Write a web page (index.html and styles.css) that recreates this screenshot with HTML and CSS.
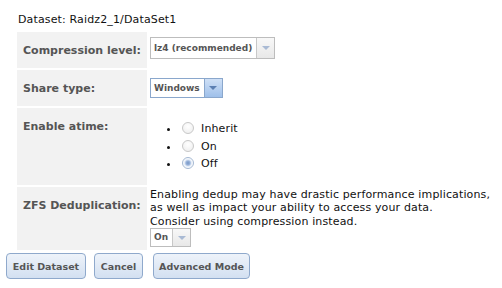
FILE: index.html
```html
<!DOCTYPE html>
<html>
<head>
<meta charset="utf-8">
<link rel="stylesheet" href="styles.css">
</head>
<body>
<div class="page">
  <div class="dataset">Dataset: Raidz2_1/DataSet1</div>
  <table class="form">
    <tr class="r-comp">
      <th>Compression level:</th>
      <td><span class="select wide"><span class="sel-text">lz4 (recommended)</span><span class="arrow"><span class="tri"></span></span></span></td>
    </tr>
    <tr class="r-share">
      <th>Share type:</th>
      <td><span class="select focus"><span class="sel-text">Windows</span><span class="arrow"><span class="tri"></span></span></span></td>
    </tr>
    <tr class="r-atime">
      <th>Enable atime:</th>
      <td>
        <ul class="radios">
          <li><span class="radio"></span>Inherit</li>
          <li><span class="radio"></span>On</li>
          <li><span class="radio checked"></span>Off</li>
        </ul>
      </td>
    </tr>
    <tr class="r-dedup">
      <th>ZFS Deduplication:</th>
      <td>
        <div class="help">Enabling dedup may have drastic performance implications,<br>as well as impact your ability to access your data.<br>Consider using compression instead.</div>
        <span class="select small"><span class="sel-text">On</span><span class="arrow"><span class="tri"></span></span></span>
      </td>
    </tr>
  </table>
  <div class="buttons">
    <button class="btn b-edit">Edit Dataset</button>
    <button class="btn b-cancel">Cancel</button>
    <button class="btn b-adv">Advanced Mode</button>
  </div>
</div>
</body>
</html>
```

FILE: styles.css
```css
html, body {
  margin: 0;
  padding: 0;
  background: #ffffff;
}
body {
  font-family: "DejaVu Sans", Verdana, sans-serif;
  font-size: 11px;
  color: #111;
  letter-spacing: 0.14px;
}
.page {
  padding: 13px 0 0 6px;
}
.dataset {
  margin-left: 12px;
  height: 13px;
  line-height: 13px;
}
.form {
  border-collapse: separate;
  border-spacing: 2px;
  margin: 4px 0 0 9px;
}
.form th {
  width: 118px;
  min-width: 118px;
  max-width: 118px;
  background: #f2f2f2;
  text-align: left;
  vertical-align: top;
  font-weight: bold;
  color: #555;
  padding: 12px 6px 11px 6px;
  line-height: 13px;
  white-space: nowrap;
  letter-spacing: 0;
}
.form td {
  vertical-align: top;
  padding: 1px 0 3px 1px;
}
.r-comp td { padding-top: 5px; }
.r-share td { padding-top: 8px; }
.r-dedup th { padding-top: 12px; }
.select {
  display: inline-flex;
  height: 22px;
  border: 1px solid #bdbdbd;
  background: #fff;
  box-sizing: border-box;
  white-space: nowrap;
  vertical-align: top;
  letter-spacing: 0;
}
.sel-text {
  font-size: 9px;
  font-weight: bold;
  color: #555;
  padding: 0 3px 0 3px;
  line-height: 20px;
  border-right: 1px solid #c8c8c8;
}
.arrow {
  width: 17px;
  background: linear-gradient(#f8f8f8, #e8e8e8);
  display: flex;
  align-items: center;
  justify-content: center;
}
.tri {
  width: 0;
  height: 0;
  border-left: 4px solid transparent;
  border-right: 4px solid transparent;
  border-top: 4px solid #a9bad4;
}
.wide { width: 125px; }
.wide .sel-text { flex: 1; }
.select.focus {
  border-color: #8aa7cc;
  height: 20px;
}
.focus .sel-text { line-height: 18px; border-right-color: #8aa7cc; padding-right: 4px; }
.focus .arrow {
  background: linear-gradient(#cfe0f6, #9fc0ea);
}
.focus .tri { border-top-color: #5b7fb2; }
.select.small { height: 19px; margin-top: 0; }
.small .sel-text { line-height: 17px; padding-right: 4px; }
.radios {
  margin: 11px 0 9px 0;
  padding: 0 0 0 30px;
  list-style: disc;
}
.radios li {
  height: 17.5px;
  line-height: 17px;
}
.radio {
  display: inline-block;
  width: 12px;
  height: 12px;
  border: 1px solid #c8c8c8;
  border-radius: 50%;
  background: radial-gradient(circle at 50% 35%, #ffffff, #ececec);
  vertical-align: -2px;
  margin: 0 7px 0 2px;
  box-sizing: border-box;
}
.radio.checked {
  border-color: #a4b8d2;
  background: radial-gradient(circle, #7896c4 0, #97b2da 2px, #e4ecf7 3.5px, #ffffff 5px);
}
.help {
  line-height: 13.5px;
  color: #111;
  white-space: nowrap;
}
.buttons {
  display: flex;
  margin-top: 1px;
}
.btn {
  font-family: "DejaVu Sans", Verdana, sans-serif;
  font-size: 9.5px;
  font-weight: bold;
  color: #555;
  height: 26px;
  border: 1px solid #8fa9cc;
  border-radius: 4px;
  background: linear-gradient(#eef3fa, #d3e0f1);
  padding: 0;
  margin: 0 8px 0 0;
  white-space: nowrap;
  letter-spacing: 0;
}
.b-edit { width: 80px; }
.b-cancel { width: 49px; margin-right: 10px; }
.b-adv { width: 97px; }
```
